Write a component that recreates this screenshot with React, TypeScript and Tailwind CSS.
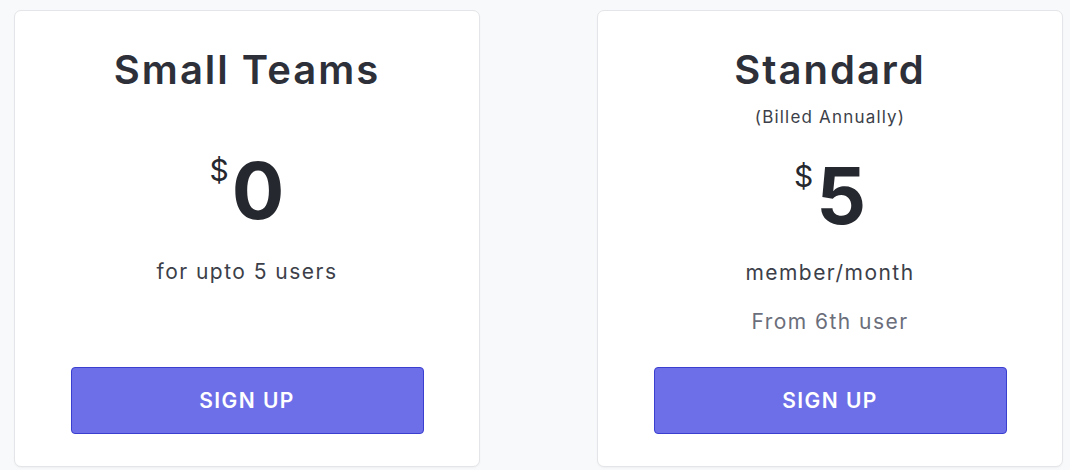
export default function App() {
  return (
    <div
      className="min-h-screen bg-[#f8f9fa] flex items-start gap-[117px] pl-[14px] pt-[10px]"
      style={{ fontFamily: "Inter, 'Noto Sans', sans-serif" }}
    >
      {/* Small Teams */}
      <div className="w-[466px] h-[457px] bg-white border border-[#e4e5e8] rounded-[7px] shadow-[0_1px_2px_rgba(0,0,0,0.04)] flex flex-col items-center pt-[37px] pb-[32px]">
        <h2 className="text-[40px] leading-[44px] font-semibold tracking-[0.05em] text-[#2d3039]">Small Teams</h2>
        <div className="mt-[60px] flex items-start gap-[3px] text-[#26282f]">
          <span className="text-[30px] leading-[28px] mt-[4px]">$</span>
          <span className="text-[78px] leading-[78px] font-bold">0</span>
        </div>
        <p className="mt-[28px] text-[21px] leading-[28px] tracking-[0.07em] text-[#3c3f49]">for upto 5 users</p>
        <button className="mt-auto w-[353px] h-[67px] bg-[#6d6fe8] border border-[#3b3fcf] rounded-[4px] text-white text-[21px] font-semibold tracking-[0.07em]">
          SIGN UP
        </button>
      </div>

      {/* Standard */}
      <div className="w-[466px] h-[457px] bg-white border border-[#e4e5e8] rounded-[7px] shadow-[0_1px_2px_rgba(0,0,0,0.04)] flex flex-col items-center pt-[37px] pb-[32px]">
        <h2 className="text-[40px] leading-[44px] font-semibold tracking-[0.05em] text-[#2d3039]">Standard</h2>
        <p className="mt-[13px] text-[17px] leading-[24px] tracking-[0.07em] text-[#3c3f49]">(Billed Annually)</p>
        <div className="mt-[28px] flex items-start gap-[3px] text-[#26282f]">
          <span className="text-[30px] leading-[28px] mt-[5px]">$</span>
          <span className="text-[78px] leading-[78px] font-bold">5</span>
        </div>
        <p className="mt-[24px] text-[21px] leading-[28px] tracking-[0.07em] text-[#3c3f49]">member/month</p>
        <p className="mt-[21px] text-[21px] leading-[28px] tracking-[0.07em] text-[#6b6e7b]">From 6th user</p>
        <button className="mt-auto w-[353px] h-[67px] bg-[#6d6fe8] border border-[#3b3fcf] rounded-[4px] text-white text-[21px] font-semibold tracking-[0.07em]">
          SIGN UP
        </button>
      </div>
    </div>
  );
}
